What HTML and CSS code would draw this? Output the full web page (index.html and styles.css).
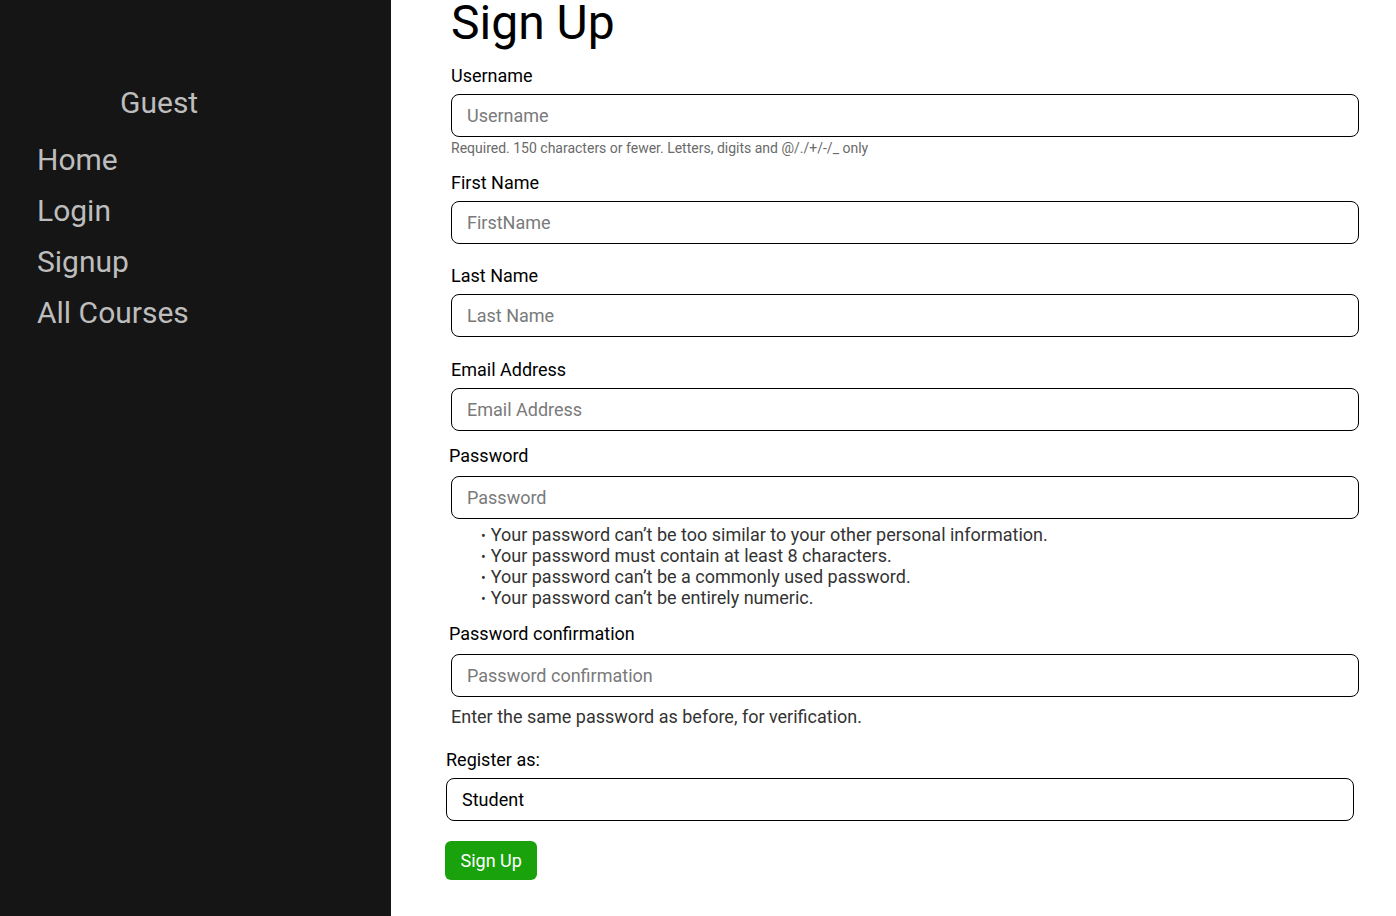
FILE: index.html
```html
<!DOCTYPE html>
<html lang="en">
<head>
<meta charset="utf-8">
<title>Sign Up</title>
<link rel="stylesheet" href="styles.css">
</head>
<body>
<div class="layout">
  <aside class="sidebar">
    <div class="guest">Guest</div>
    <nav class="nav">
      <a href="#" class="nav-link">Home</a>
      <a href="#" class="nav-link">Login</a>
      <a href="#" class="nav-link">Signup</a>
      <a href="#" class="nav-link">All Courses</a>
    </nav>
  </aside>
  <main class="main">
    <h1 class="title">Sign Up</h1>
    <form class="form">
      <div class="field">
        <label class="label">Username</label>
        <input class="input" type="text" placeholder="Username">
        <div class="help-small">Required. 150 characters or fewer. Letters, digits and @/./+/-/_ only</div>
      </div>
      <div class="field field-first">
        <label class="label">First Name</label>
        <input class="input" type="text" placeholder="FirstName">
      </div>
      <div class="field field-last">
        <label class="label">Last Name</label>
        <input class="input" type="text" placeholder="Last Name">
      </div>
      <div class="field field-email">
        <label class="label">Email Address</label>
        <input class="input" type="text" placeholder="Email Address">
      </div>
      <div class="field field-pass">
        <label class="label label-shift">Password</label>
        <input class="input" type="password" placeholder="Password">
        <ul class="rules">
          <li>Your password can’t be too similar to your other personal information.</li>
          <li>Your password must contain at least 8 characters.</li>
          <li>Your password can’t be a commonly used password.</li>
          <li>Your password can’t be entirely numeric.</li>
        </ul>
      </div>
      <div class="field field-confirm">
        <label class="label label-shift">Password confirmation</label>
        <input class="input" type="password" placeholder="Password confirmation">
        <div class="help-big">Enter the same password as before, for verification.</div>
      </div>
      <div class="field field-role">
        <label class="label">Register as:</label>
        <select class="input select">
          <option>Student</option>
        </select>
      </div>
      <button type="button" class="btn">Sign Up</button>
    </form>
  </main>
</div>
</body>
</html>
```

FILE: styles.css
```css
* { box-sizing: border-box; }
html, body {
  margin: 0;
  padding: 0;
  height: 100%;
  overflow: hidden;
  background: #ffffff;
  font-family: Roboto, "Liberation Sans", Arial, sans-serif;
}
.layout {
  display: flex;
  min-height: 916px;
}
.sidebar {
  width: 391px;
  flex: 0 0 391px;
  background: #151515;
  padding-top: 85px;
  color: #bdbdbd;
}
.guest {
  font-size: 30px;
  line-height: 36px;
  padding-left: 120px;
}
.nav {
  display: flex;
  flex-direction: column;
  gap: 15px;
  padding-left: 37px;
  margin-top: 21px;
}
.nav-link {
  font-size: 30px;
  line-height: 36px;
  color: #bdbdbd;
  text-decoration: none;
}
.main {
  flex: 1;
  padding-left: 60px;
}
.title {
  font-size: 48px;
  line-height: 56px;
  font-weight: 400;
  margin: -5px 0 14px 0;
  color: #000;
}
.form {
  display: flex;
  flex-direction: column;
  align-items: flex-start;
}
.field {
  display: flex;
  flex-direction: column;
  align-items: flex-start;
}
.label {
  font-size: 18px;
  line-height: 22px;
  color: #000;
  margin-bottom: 7px;
}
.input {
  width: 908px;
  height: 43px;
  border: 1px solid #000;
  border-radius: 8px;
  padding: 0 15px;
  font-family: Roboto, "Liberation Sans", Arial, sans-serif;
  font-size: 18px;
  color: #000;
  background: #fff;
  outline: none;
}
.input::placeholder {
  color: #7a7a7a;
}
.help-small {
  font-size: 14px;
  line-height: 16px;
  color: #6a6a6a;
  margin-top: 3px;
}
.field-first { margin-top: 16px; }
.field-last { margin-top: 21px; }
.field-email { margin-top: 22px; }
.field-pass { margin-top: 14px; }
.label-shift { margin-left: -2px; margin-bottom: 9px; }
.rules {
  list-style: none;
  margin: 5px 0 0 0;
  padding: 0 0 0 30px;
  font-size: 18px;
  line-height: 21px;
  color: #333;
}
.rules li::before {
  content: "•";
  font-size: 14px;
  line-height: 1;
  margin-right: 5px;
}
.field-confirm { margin-top: 15px; }
.help-big {
  font-size: 18px;
  line-height: 21px;
  color: #333;
  margin-top: 9px;
}
.field-role {
  margin-top: 22px;
  margin-left: -5px;
}
.select {
  appearance: none;
  -webkit-appearance: none;
  color: #000;
}
.btn {
  margin-top: 20px;
  margin-left: -6px;
  height: 39px;
  padding: 0 15.5px;
  border: none;
  border-radius: 6px;
  background: #1aa20d;
  color: #fff;
  font-family: Roboto, "Liberation Sans", Arial, sans-serif;
  font-size: 18px;
  cursor: pointer;
}
```
